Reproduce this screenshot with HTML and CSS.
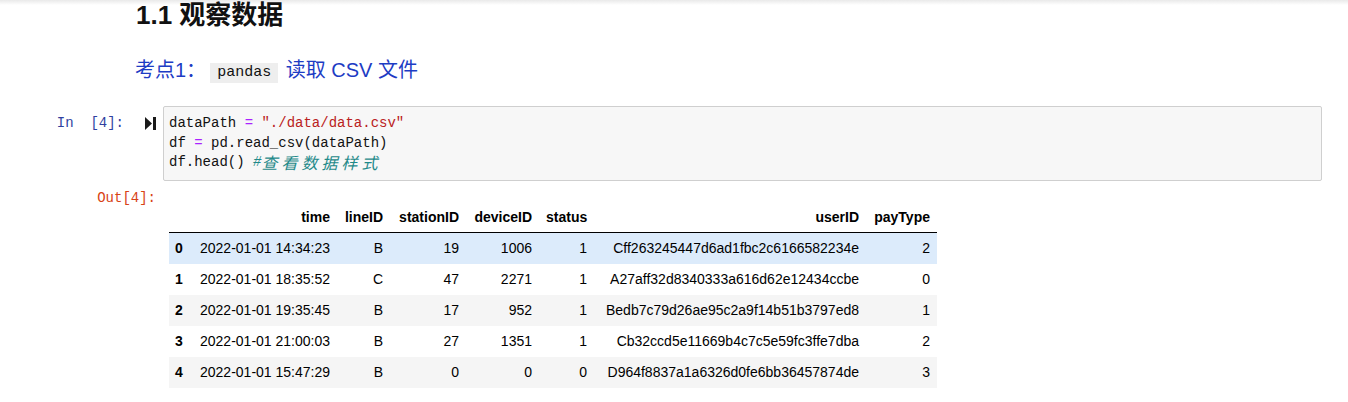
FILE: index.html
```html
<!DOCTYPE html>
<html lang="zh">
<head>
<meta charset="utf-8">
<title>观察数据</title>
<link rel="stylesheet" href="styles.css">
</head>
<body>
<div class="page">
  <h2 class="title">1.1 观察数据</h2>
  <p class="md">考点1：<code class="chip">pandas</code> 读取 CSV 文件</p>

  <div class="cell">
    <div class="prompt in-prompt">In&nbsp;&nbsp;[4]:</div>
    <div class="run">
      <svg width="11" height="13" viewBox="0 0 11 13"><polygon points="0,0 7,6.5 0,13" fill="#1a1a1a"/><rect x="8" y="0" width="3" height="13" fill="#1a1a1a"/></svg>
    </div>
    <div class="input">
      <div class="line">dataPath <span class="op">=</span> <span class="str">"./data/data.csv"</span></div>
      <div class="line">df <span class="op">=</span> pd.read_csv(dataPath)</div>
      <div class="line">df.head() <span class="cm">#</span><span class="cm cjk">查看数据样式</span></div>
    </div>
  </div>

  <div class="outrow">
    <div class="prompt out-prompt">Out[4]:</div>
    <div class="output">
      <table class="df">
        <thead>
          <tr><th class="idx"></th><th>time</th><th>lineID</th><th>stationID</th><th>deviceID</th><th>status</th><th>userID</th><th>payType</th></tr>
        </thead>
        <tbody>
          <tr class="hover"><th class="idx">0</th><td>2022-01-01 14:34:23</td><td>B</td><td>19</td><td>1006</td><td>1</td><td>Cff263245447d6ad1fbc2c6166582234e</td><td>2</td></tr>
          <tr><th class="idx">1</th><td>2022-01-01 18:35:52</td><td>C</td><td>47</td><td>2271</td><td>1</td><td>A27aff32d8340333a616d62e12434ccbe</td><td>0</td></tr>
          <tr class="stripe"><th class="idx">2</th><td>2022-01-01 19:35:45</td><td>B</td><td>17</td><td>952</td><td>1</td><td>Bedb7c79d26ae95c2a9f14b51b3797ed8</td><td>1</td></tr>
          <tr><th class="idx">3</th><td>2022-01-01 21:00:03</td><td>B</td><td>27</td><td>1351</td><td>1</td><td>Cb32ccd5e11669b4c7c5e59fc3ffe7dba</td><td>2</td></tr>
          <tr class="stripe"><th class="idx">4</th><td>2022-01-01 15:47:29</td><td>B</td><td>0</td><td>0</td><td>0</td><td>D964f8837a1a6326d0fe6bb36457874de</td><td>3</td></tr>
        </tbody>
      </table>
    </div>
  </div>
</div>
</body>
</html>
```

FILE: styles.css
```css
html, body {
  margin: 0;
  padding: 0;
}
body {
  background: linear-gradient(#e9e9e9, #ffffff 5px) no-repeat, #ffffff;
  font-family: "Liberation Sans", "Noto Sans CJK SC", sans-serif;
  color: #000;
}
.page {
  width: 1348px;
}
.title {
  margin: 0;
  padding-left: 136px;
  font-size: 26px;
  line-height: 30px;
  font-weight: bold;
  color: #111;
}
.md {
  margin: 26px 0 0;
  padding-left: 135px;
  font-size: 20px;
  line-height: 28px;
  color: #1d3cc4;
}
.chip {
  display: inline-block;
  font-family: "Liberation Mono", monospace;
  font-size: 15px;
  line-height: 20px;
  background: #eeeeee;
  color: #111;
  padding: 0 7px;
  margin: 0 2px 0 4px;
  vertical-align: 1px;
}
.cell {
  display: flex;
  align-items: flex-start;
  margin-top: 22px;
}
.prompt {
  font-family: "Liberation Mono", monospace;
  font-size: 14px;
  line-height: 19.5px;
  text-align: right;
  padding-top: 8px;
  flex: none;
}
.in-prompt {
  width: 124px;
  color: #303f9f;
}
.run {
  flex: none;
  width: 11px;
  height: 13px;
  margin-left: 21px;
  margin-top: 11px;
  margin-right: 7px;
}
.run svg {
  display: block;
}
.input {
  flex: none;
  background: #f7f7f7;
  border: 1px solid #cfcfcf;
  border-radius: 2px;
  padding: 7px 5px;
  width: 1147px;
  font-family: "Liberation Mono", monospace;
  font-size: 14px;
  color: #111;
}
.line {
  height: 19.5px;
  line-height: 19.5px;
  white-space: pre;
}
.op { color: #aa22ff; }
.str { color: #ba2121; }
.cm { color: #1f8a8a; font-style: italic; }
.cjk {
  display: inline-block;
  vertical-align: top;
  line-height: 19.5px;
  font-family: "Noto Sans CJK SC", sans-serif;
  font-size: 16px;
  letter-spacing: 4px;
}
.outrow {
  display: flex;
  align-items: flex-start;
}
.out-prompt {
  width: 156px;
  color: #d84315;
}
.output {
  margin-left: 13px;
  padding-top: 22px;
}
.df {
  border-collapse: collapse;
  table-layout: fixed;
  width: 768px;
  font-size: 14px;
  color: #000;
}
.df th, .df td {
  text-align: right;
  padding: 0 7px;
  white-space: nowrap;
  vertical-align: middle;
}
.df thead tr {
  height: 30px;
  border-bottom: 1px solid #000;
}
.df thead th {
  font-weight: bold;
}
.df tbody tr {
  height: 31px;
}
.df th.idx {
  text-align: left;
  padding-left: 6px;
  padding-right: 0;
  font-weight: bold;
}
.df th:nth-child(1) { width: 16px; }
.df th:nth-child(2) { width: 132px; }
.df th:nth-child(3) { width: 39px; }
.df th:nth-child(4) { width: 62px; }
.df th:nth-child(5) { width: 59px; }
.df th:nth-child(6) { width: 41px; }
.df th:nth-child(7) { width: 258px; }
.df th:nth-child(8) { width: 57px; }
.df tr.stripe {
  background: #f5f5f5;
}
.df tr.hover {
  background: #dcebfb;
}
```
